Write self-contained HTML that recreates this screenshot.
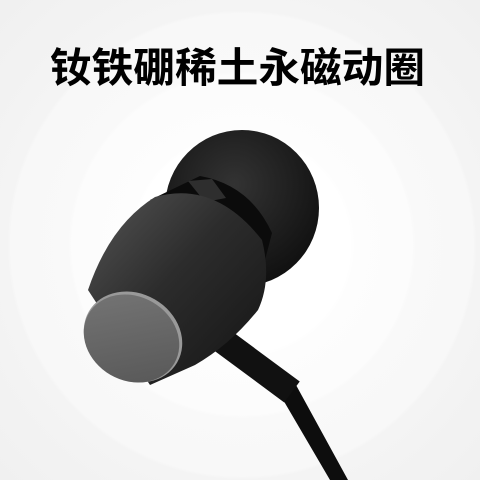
<!DOCTYPE html>
<html><head><meta charset="utf-8"><style>
html,body{margin:0;padding:0;width:480px;height:480px;overflow:hidden;background:#fff}
svg{display:block}
</style></head><body>
<svg width="480" height="480" viewBox="0 0 480 480" xmlns="http://www.w3.org/2000/svg">
<defs>
<radialGradient id="bg" cx="242" cy="245" r="340" gradientUnits="userSpaceOnUse">
<stop offset="0" stop-color="#fff"/><stop offset="0.32" stop-color="#fff"/>
<stop offset="0.33" stop-color="#fdfdfd"/><stop offset="0.5" stop-color="#fcfcfc"/>
<stop offset="0.51" stop-color="#f9f9f9"/><stop offset="0.68" stop-color="#f8f8f8"/>
<stop offset="0.69" stop-color="#f4f4f4"/><stop offset="1" stop-color="#f0f0f0"/>
</radialGradient>
<radialGradient id="tip" cx="0.45" cy="0.35" r="0.7">
<stop offset="0" stop-color="#333"/><stop offset="1" stop-color="#0e0e0e"/>
</radialGradient>
<linearGradient id="body" x1="0" y1="0" x2="1" y2="1">
<stop offset="0" stop-color="#555"/><stop offset="0.45" stop-color="#2c2c2c"/><stop offset="1" stop-color="#141414"/>
</linearGradient>
<linearGradient id="face" x1="0" y1="0" x2="1" y2="1">
<stop offset="0" stop-color="#777"/><stop offset="1" stop-color="#555"/>
</linearGradient>
</defs>
<rect width="480" height="480" fill="url(#bg)"/>
<text x="50" y="82" font-family="'Liberation Sans','Noto Sans CJK SC',sans-serif" font-weight="bold" font-size="41" textLength="375" lengthAdjust="spacingAndGlyphs" fill="#000">钕铁硼稀土永磁动圈</text>
<polygon points="216,338 228,330 296,385 348,480 330,480 282,398" fill="#0d0d0d"/>
<path d="M215 335 L292 392" stroke="#111" stroke-width="26" fill="none"/>
<ellipse cx="242" cy="208" rx="77" ry="78" fill="url(#tip)"/>
<path d="M150 200 L200 176 Q250 185 272 233 L265 260 Z" fill="#0b0b0b"/>
<path d="M188 181 L212 179 L226 198 L205 202 Z" fill="#2e2e2e"/>
<path d="M88 290 Q110 225 155 197 Q215 180 262 240 Q272 280 258 310 Q230 345 195 365 L150 385 Z" fill="url(#body)"/>
<ellipse cx="133" cy="337" rx="51" ry="43.5" transform="rotate(30 133 337)" fill="#999"/>
<ellipse cx="131.5" cy="338.5" rx="49.5" ry="42" transform="rotate(30 131.5 338.5)" fill="url(#face)"/>
</svg>
</body></html>
